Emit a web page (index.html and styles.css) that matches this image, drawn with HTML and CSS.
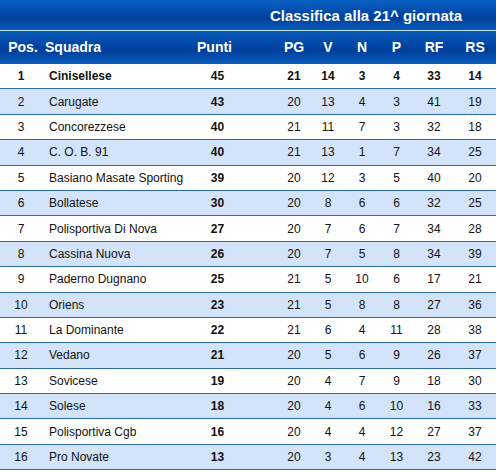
FILE: index.html
```html
<!DOCTYPE html>
<html lang="it">
<head>
<meta charset="utf-8">
<title>Classifica</title>
<link rel="stylesheet" href="styles.css">
</head>
<body>
<div class="standings">
  <div class="title">Classifica alla 21^ giornata</div>
  <div class="row head">
    <div class="c pos">Pos.</div><div class="c team">Squadra</div><div class="c pts">Punti</div><div class="c pg">PG</div><div class="c">V</div><div class="c">N</div><div class="c">P</div><div class="c">RF</div><div class="c">RS</div>
  </div>
  <div class="row leader">
    <div class="c pos">1</div><div class="c team">Cinisellese</div><div class="c pts">45</div><div class="c pg">21</div><div class="c">14</div><div class="c">3</div><div class="c">4</div><div class="c">33</div><div class="c">14</div>
  </div>
  <div class="row alt">
    <div class="c pos">2</div><div class="c team">Carugate</div><div class="c pts">43</div><div class="c pg">20</div><div class="c">13</div><div class="c">4</div><div class="c">3</div><div class="c">41</div><div class="c">19</div>
  </div>
  <div class="row">
    <div class="c pos">3</div><div class="c team">Concorezzese</div><div class="c pts">40</div><div class="c pg">21</div><div class="c">11</div><div class="c">7</div><div class="c">3</div><div class="c">32</div><div class="c">18</div>
  </div>
  <div class="row alt">
    <div class="c pos">4</div><div class="c team">C. O. B. 91</div><div class="c pts">40</div><div class="c pg">21</div><div class="c">13</div><div class="c">1</div><div class="c">7</div><div class="c">34</div><div class="c">25</div>
  </div>
  <div class="row">
    <div class="c pos">5</div><div class="c team">Basiano Masate Sporting</div><div class="c pts">39</div><div class="c pg">20</div><div class="c">12</div><div class="c">3</div><div class="c">5</div><div class="c">40</div><div class="c">20</div>
  </div>
  <div class="row alt">
    <div class="c pos">6</div><div class="c team">Bollatese</div><div class="c pts">30</div><div class="c pg">20</div><div class="c">8</div><div class="c">6</div><div class="c">6</div><div class="c">32</div><div class="c">25</div>
  </div>
  <div class="row">
    <div class="c pos">7</div><div class="c team">Polisportiva Di Nova</div><div class="c pts">27</div><div class="c pg">20</div><div class="c">7</div><div class="c">6</div><div class="c">7</div><div class="c">34</div><div class="c">28</div>
  </div>
  <div class="row alt">
    <div class="c pos">8</div><div class="c team">Cassina Nuova</div><div class="c pts">26</div><div class="c pg">20</div><div class="c">7</div><div class="c">5</div><div class="c">8</div><div class="c">34</div><div class="c">39</div>
  </div>
  <div class="row">
    <div class="c pos">9</div><div class="c team">Paderno Dugnano</div><div class="c pts">25</div><div class="c pg">21</div><div class="c">5</div><div class="c">10</div><div class="c">6</div><div class="c">17</div><div class="c">21</div>
  </div>
  <div class="row alt">
    <div class="c pos">10</div><div class="c team">Oriens</div><div class="c pts">23</div><div class="c pg">21</div><div class="c">5</div><div class="c">8</div><div class="c">8</div><div class="c">27</div><div class="c">36</div>
  </div>
  <div class="row">
    <div class="c pos">11</div><div class="c team">La Dominante</div><div class="c pts">22</div><div class="c pg">21</div><div class="c">6</div><div class="c">4</div><div class="c">11</div><div class="c">28</div><div class="c">38</div>
  </div>
  <div class="row alt">
    <div class="c pos">12</div><div class="c team">Vedano</div><div class="c pts">21</div><div class="c pg">20</div><div class="c">5</div><div class="c">6</div><div class="c">9</div><div class="c">26</div><div class="c">37</div>
  </div>
  <div class="row">
    <div class="c pos">13</div><div class="c team">Sovicese</div><div class="c pts">19</div><div class="c pg">20</div><div class="c">4</div><div class="c">7</div><div class="c">9</div><div class="c">18</div><div class="c">30</div>
  </div>
  <div class="row alt">
    <div class="c pos">14</div><div class="c team">Solese</div><div class="c pts">18</div><div class="c pg">20</div><div class="c">4</div><div class="c">6</div><div class="c">10</div><div class="c">16</div><div class="c">33</div>
  </div>
  <div class="row">
    <div class="c pos">15</div><div class="c team">Polisportiva Cgb</div><div class="c pts">16</div><div class="c pg">20</div><div class="c">4</div><div class="c">4</div><div class="c">12</div><div class="c">27</div><div class="c">37</div>
  </div>
  <div class="row alt">
    <div class="c pos">16</div><div class="c team">Pro Novate</div><div class="c pts">13</div><div class="c pg">20</div><div class="c">3</div><div class="c">4</div><div class="c">13</div><div class="c">23</div><div class="c">42</div>
  </div>
</div>
</body>
</html>
```
FILE: styles.css
```css
html, body {
  margin: 0;
  padding: 0;
  background: #ffffff;
}

body {
  font-family: "Liberation Sans", Arial, sans-serif;
  font-size: 12px;
  color: #111111;
}

.standings {
  width: 496px;
}

.title {
  height: 31px;
  display: flex;
  align-items: center;
  justify-content: center;
  padding-left: 236px;
  box-sizing: border-box;
  color: #ffffff;
  font-weight: bold;
  font-size: 15px;
  background: linear-gradient(#0c62c4 0%, #0048a8 45%, #003f9c 60%, #0a5cbc 100%);
  border-bottom: 1px solid #b8e2f4;
}

.row {
  display: grid;
  grid-template-columns: 42px 146px 67px 56px 34px 34px 35px 40px 42px;
  height: 24.4px;
  align-items: center;
  border-bottom: 1px solid #2d6aa8;
  background: #ffffff;
}

.row.alt {
  background: #d3e4fa;
}

.row.head {
  height: 32px;
  border-bottom: 1px solid #0b5ab8;
  color: #ffffff;
  font-weight: bold;
  font-size: 14px;
  background: linear-gradient(#0a5ab8 0%, #0046a4 45%, #003e9a 60%, #0a5cbd 100%);
}

.c {
  text-align: center;
  white-space: nowrap;
}

.c.team {
  text-align: left;
  padding-left: 7px;
}

.head .c.team {
  padding-left: 3px;
}

.c.pos {
  padding-left: 0;
}

.head .c.pos {
  padding-left: 4px;
}

.c.pts {
  font-weight: bold;
  padding-right: 8px;
}

.head .c.pts {
  padding-right: 14px;
}

.c.pg {
  padding-left: 22px;
}

.row.leader {
  font-weight: bold;
}
```
